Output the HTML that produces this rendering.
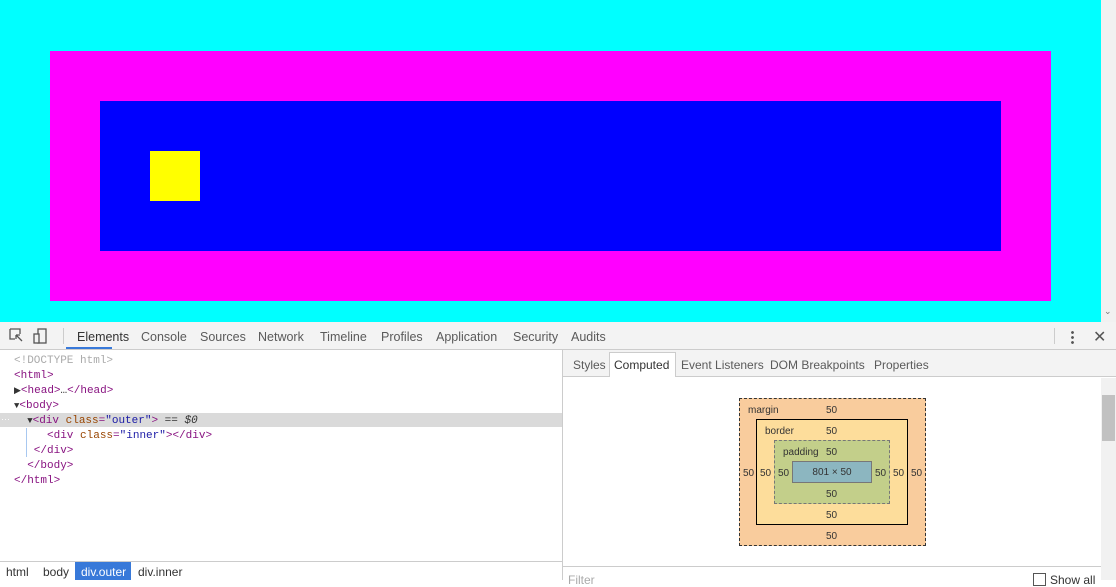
<!DOCTYPE html>
<html><head><style>
*{margin:0;padding:0;box-sizing:border-box}
body{width:1116px;height:580px;overflow:hidden;position:relative;font-family:"Liberation Sans",sans-serif;font-size:12px;color:#333;background:#fff}
.a{position:absolute}
.mono{font-family:"Liberation Mono",monospace;font-size:11px}
.tag{color:#881280}.at{color:#994500}.av{color:#1a1aa6}
.bx span{position:absolute}
</style></head><body>
<div class="a" style="left:0;top:0;width:1101px;height:322px;background:#0ff"></div>
<div class="a" style="left:1101px;top:0;width:15px;height:322px;background:#f1f1f1"></div>
<div class="a" style="left:1104px;top:306px;font-size:9px;color:#777">⌄</div>
<div class="a" style="left:50px;top:51px;width:1001px;height:250px;background:#f0f"></div>
<div class="a" style="left:100px;top:101px;width:901px;height:150px;background:#00f"></div>
<div class="a" style="left:150px;top:151px;width:50px;height:50px;background:#ff0"></div>

<div class="a" style="left:0;top:322px;width:1116px;height:28px;background:#f3f3f3;border-bottom:1px solid #ccc"></div>
<svg class="a" style="left:9px;top:328px" width="40" height="18"><path d="M1 1h10v5M1 1v10h5M7 7l6 6M7 7h4M7 7v4" stroke="#555" stroke-width="1.3" fill="none"/><rect x="29" y="1" width="8" height="14" stroke="#555" fill="none" stroke-width="1.3"/><rect x="25" y="6" width="5" height="9" stroke="#555" fill="#f3f3f3" stroke-width="1.3"/></svg>
<div class="a" style="left:63px;top:328px;width:1px;height:16px;background:#ccc"></div>
<div class="a" style="top:330px;left:77px;font-size:12.5px;color:#333">Elements</div>
<div class="a" style="left:66px;top:347px;width:46px;height:2px;background:#3879d9"></div>
<div class="a" style="top:330px;left:141px;font-size:12.5px;color:#5a5a5a">Console</div>
<div class="a" style="top:330px;left:200px;font-size:12.5px;color:#5a5a5a">Sources</div>
<div class="a" style="top:330px;left:258px;font-size:12.5px;color:#5a5a5a">Network</div>
<div class="a" style="top:330px;left:320px;font-size:12.5px;color:#5a5a5a">Timeline</div>
<div class="a" style="top:330px;left:381px;font-size:12.5px;color:#5a5a5a">Profiles</div>
<div class="a" style="top:330px;left:436px;font-size:12.5px;color:#5a5a5a">Application</div>
<div class="a" style="top:330px;left:513px;font-size:12.5px;color:#5a5a5a">Security</div>
<div class="a" style="top:330px;left:571px;font-size:12.5px;color:#5a5a5a">Audits</div>
<div class="a" style="left:1054px;top:328px;width:1px;height:16px;background:#ccc"></div>
<div class="a" style="left:1071px;top:330px;width:3px;height:14px;background:radial-gradient(circle,#555 1.2px,transparent 1.6px) 0 0/3px 5px"></div>
<div class="a" style="left:1093px;top:327px;font-size:16px;color:#555">✕</div>

<div class="a" style="left:0;top:413px;width:562px;height:14px;background:#dadada"></div>
<div class="a" style="left:1px;top:414px;font-size:9px;color:#fff">···</div>
<div class="a mono" style="left:14px;top:354px;line-height:15px;white-space:pre;color:#881280"><span style="color:#aaa">&lt;!DOCTYPE html&gt;</span>
&lt;html&gt;
<span style="color:#333;font-size:9px">▶</span>&lt;head&gt;<span style="color:#333">…</span>&lt;/head&gt;
<span style="color:#333;font-size:9px">▼</span>&lt;body&gt;
  <span style="color:#333;font-size:9px">▼</span>&lt;div <span class="at">class</span>=<span class="av">"outer"</span>&gt; <span style="color:#333">== <i>$0</i></span>
     &lt;div <span class="at">class</span>=<span class="av">"inner"</span>&gt;&lt;/div&gt;
   &lt;/div&gt;
  &lt;/body&gt;
&lt;/html&gt;</div>
<div class="a" style="left:26px;top:428px;width:1px;height:29px;background:#a8c8f0"></div>

<div class="a" style="left:0;top:561px;width:562px;height:19px;border-top:1px solid #ccc;background:#fff"></div>
<div class="a" style="left:6px;top:565px;color:#333">html</div>
<div class="a" style="left:43px;top:565px;color:#333">body</div>
<div class="a" style="left:75px;top:562px;width:56px;height:18px;background:#3879d9"></div>
<div class="a" style="left:81px;top:565px;color:#fff">div.outer</div>
<div class="a" style="left:138px;top:565px;color:#333">div.inner</div>

<div class="a" style="left:562px;top:350px;width:1px;height:230px;background:#ccc"></div>
<div class="a" style="left:563px;top:350px;width:553px;height:27px;background:#f3f3f3;border-bottom:1px solid #ccc"></div>
<div class="a" style="left:609px;top:352px;width:67px;height:25px;background:#fff;border:1px solid #ccc;border-bottom:none"></div>
<div class="a" style="top:358px;left:573px;color:#5a5a5a">Styles</div>
<div class="a" style="top:358px;left:614px;color:#333">Computed</div>
<div class="a" style="top:358px;left:681px;color:#5a5a5a">Event Listeners</div>
<div class="a" style="top:358px;left:770px;color:#5a5a5a">DOM Breakpoints</div>
<div class="a" style="top:358px;left:874px;color:#5a5a5a">Properties</div>
<div class="a" style="left:1101px;top:378px;width:15px;height:202px;background:#f1f1f1"></div>
<div class="a" style="left:1102px;top:395px;width:13px;height:46px;background:#c1c1c1"></div>
<div class="a" style="left:563px;top:566px;width:538px;height:1px;background:#ccc"></div>
<div class="a" style="left:568px;top:573px;color:#aaa">Filter</div>
<div class="a" style="left:1033px;top:573px;width:13px;height:13px;border:1px solid #555"></div>
<div class="a" style="left:1050px;top:573px;color:#333">Show all</div>

<div class="a bx" style="left:739px;top:398px;width:187px;height:148px;background:#f9cc9d;border:1px dashed #333;font-size:10px;color:#333">
<span style="left:8px;top:6px">margin</span><span style="left:86px;top:6px">50</span><span style="left:86px;top:132px">50</span><span style="left:3px;top:69px">50</span><span style="left:171px;top:69px">50</span></div>
<div class="a bx" style="left:756px;top:419px;width:152px;height:106px;background:#fddd9b;border:1px solid #000;font-size:10px;color:#333">
<span style="left:8px;top:6px">border</span><span style="left:69px;top:6px">50</span><span style="left:69px;top:90px">50</span><span style="left:3px;top:48px">50</span><span style="left:136px;top:48px">50</span></div>
<div class="a bx" style="left:774px;top:440px;width:116px;height:64px;background:#c3cf8a;border:1px dashed #777;font-size:10px;color:#333">
<span style="left:8px;top:6px">padding</span><span style="left:51px;top:6px">50</span><span style="left:51px;top:48px">50</span><span style="left:3px;top:27px">50</span><span style="left:100px;top:27px">50</span></div>
<div class="a" style="left:792px;top:461px;width:80px;height:22px;background:#8cb6c0;border:1px solid #777;font-size:10px;color:#333;text-align:center;line-height:21px">801 × 50</div>
</body></html>
